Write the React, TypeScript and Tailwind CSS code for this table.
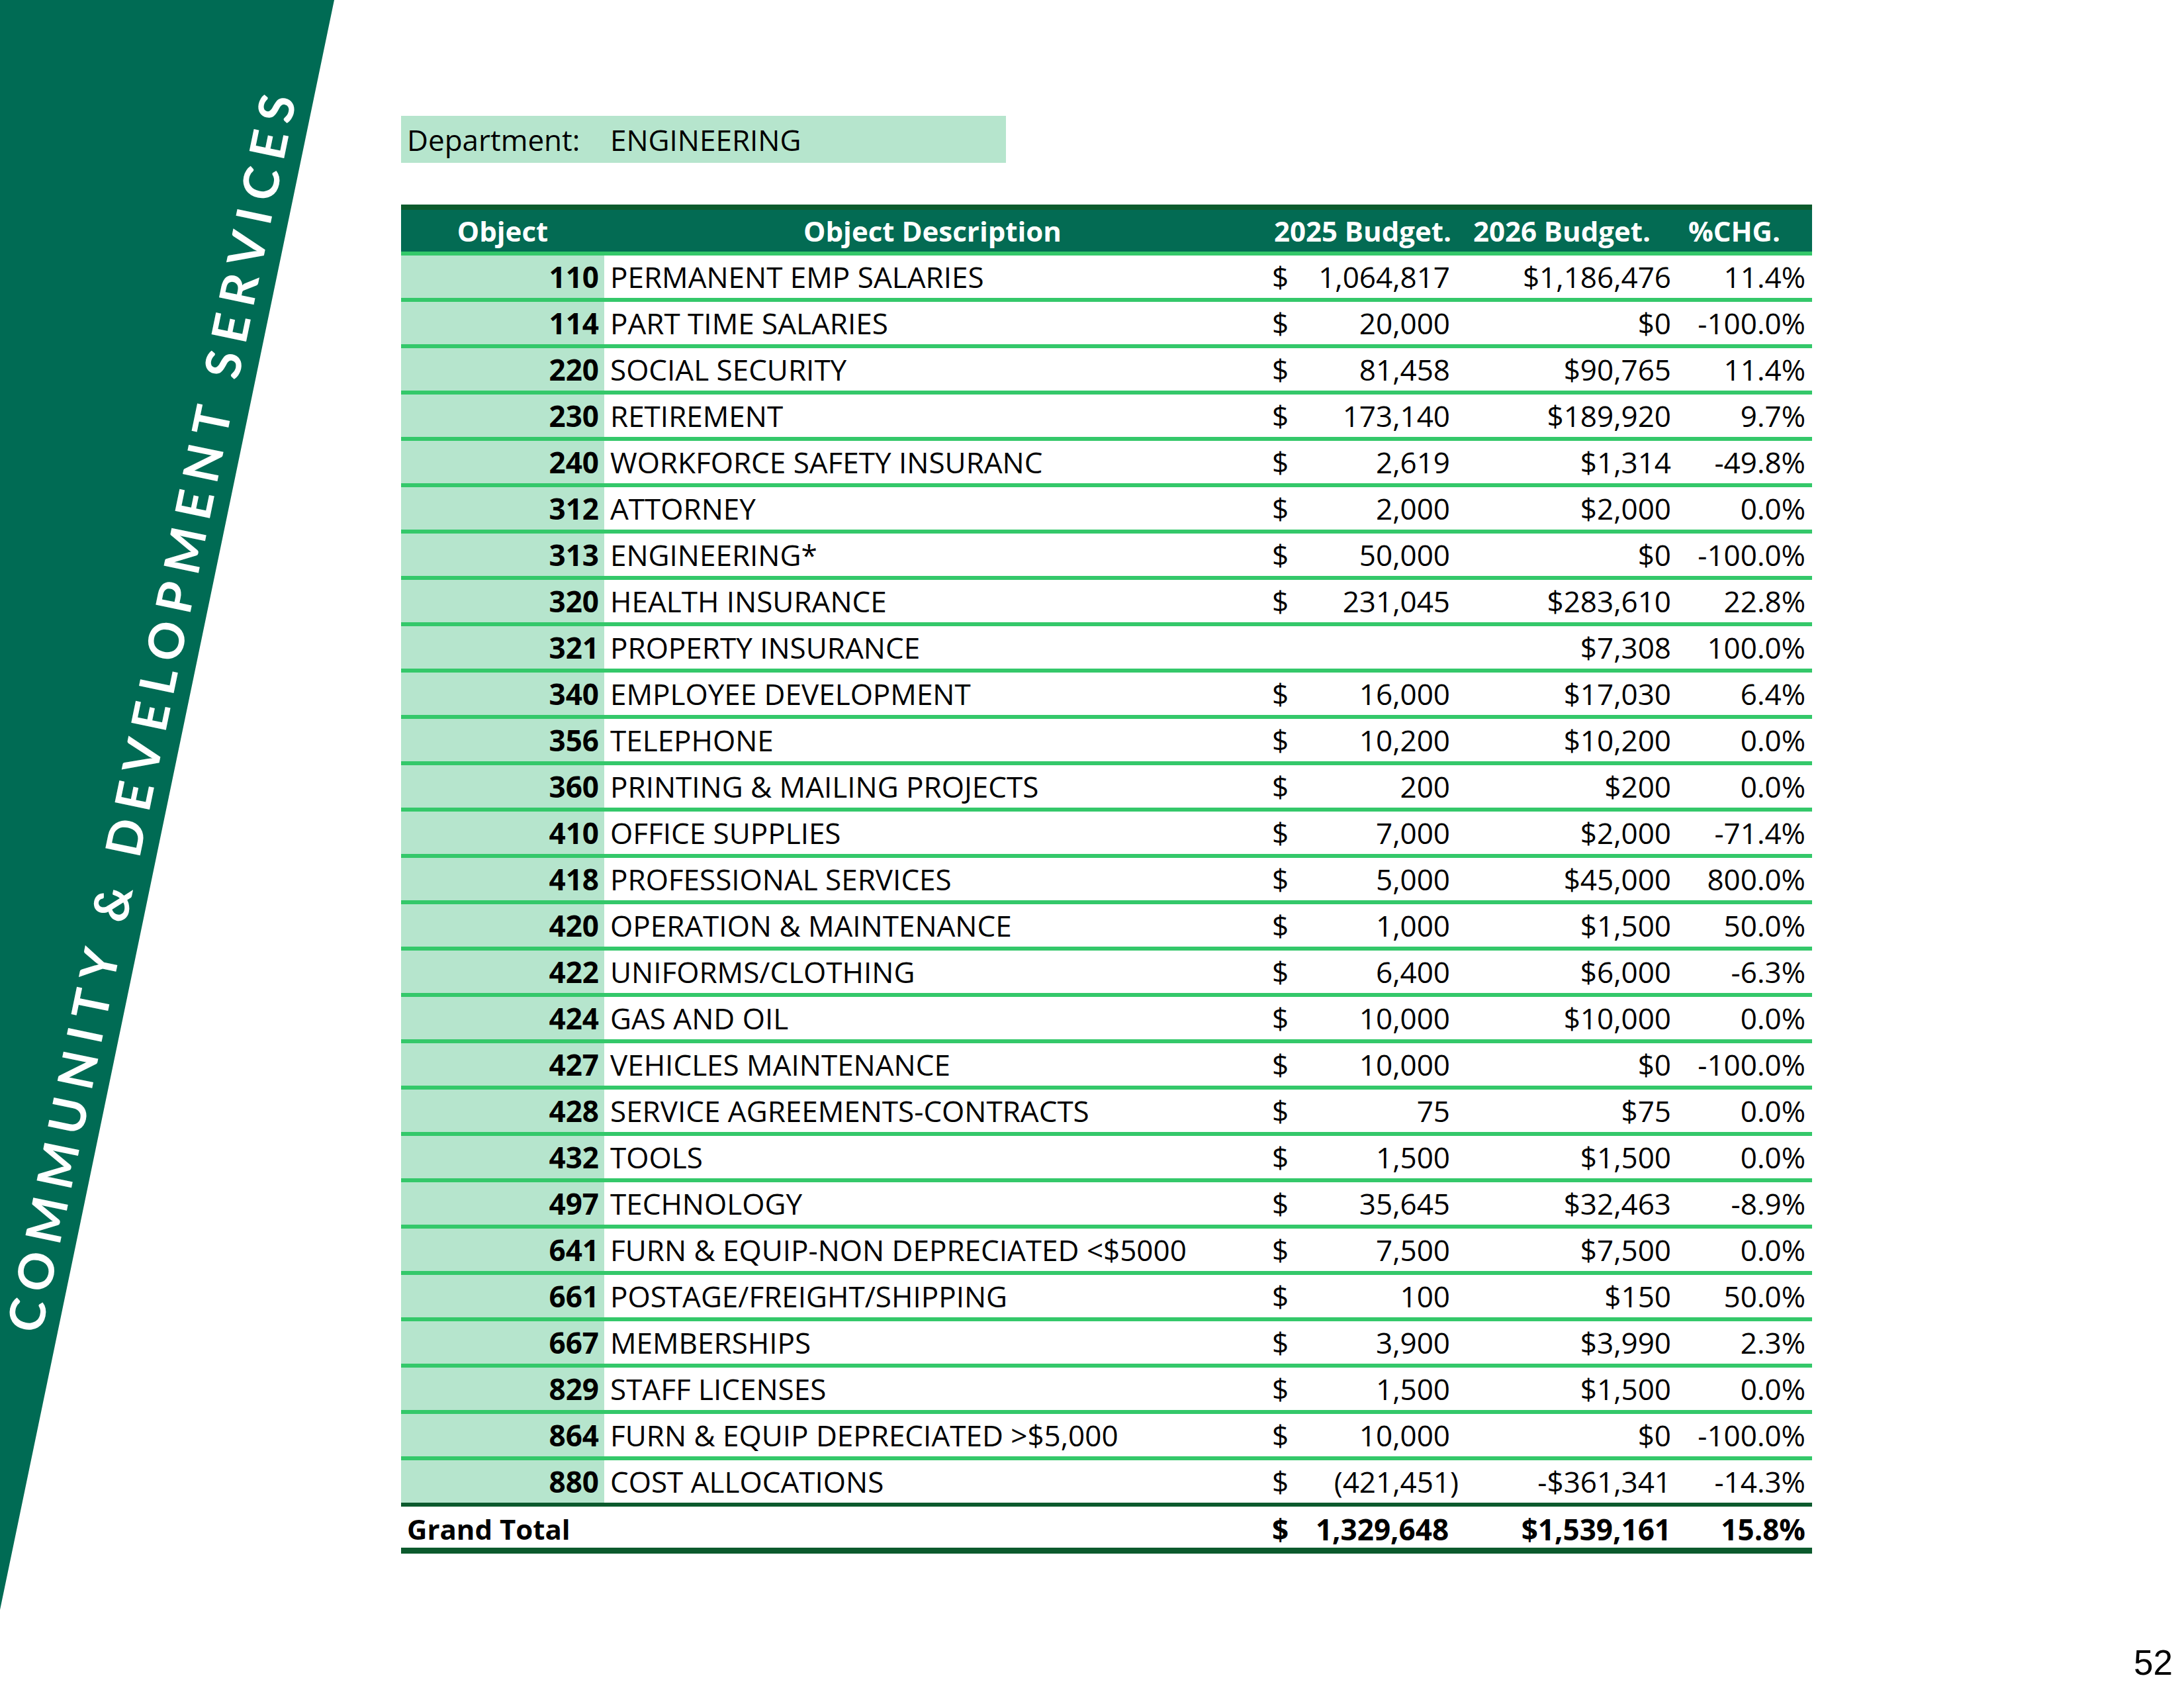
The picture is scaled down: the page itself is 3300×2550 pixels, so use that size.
import React from 'react';

interface BudgetLine {
  object: string;
  description: string;
  budget2025: string;
  budget2026: string;
  change: string;
}

const budgetLines: BudgetLine[] = [
  { object: '110', description: 'PERMANENT EMP SALARIES', budget2025: '1,064,817', budget2026: '$1,186,476', change: '11.4%' },
  { object: '114', description: 'PART TIME SALARIES', budget2025: '20,000', budget2026: '$0', change: '-100.0%' },
  { object: '220', description: 'SOCIAL SECURITY', budget2025: '81,458', budget2026: '$90,765', change: '11.4%' },
  { object: '230', description: 'RETIREMENT', budget2025: '173,140', budget2026: '$189,920', change: '9.7%' },
  { object: '240', description: 'WORKFORCE SAFETY INSURANC', budget2025: '2,619', budget2026: '$1,314', change: '-49.8%' },
  { object: '312', description: 'ATTORNEY', budget2025: '2,000', budget2026: '$2,000', change: '0.0%' },
  { object: '313', description: 'ENGINEERING*', budget2025: '50,000', budget2026: '$0', change: '-100.0%' },
  { object: '320', description: 'HEALTH INSURANCE', budget2025: '231,045', budget2026: '$283,610', change: '22.8%' },
  { object: '321', description: 'PROPERTY INSURANCE', budget2025: '', budget2026: '$7,308', change: '100.0%' },
  { object: '340', description: 'EMPLOYEE DEVELOPMENT', budget2025: '16,000', budget2026: '$17,030', change: '6.4%' },
  { object: '356', description: 'TELEPHONE', budget2025: '10,200', budget2026: '$10,200', change: '0.0%' },
  { object: '360', description: 'PRINTING & MAILING PROJECTS', budget2025: '200', budget2026: '$200', change: '0.0%' },
  { object: '410', description: 'OFFICE SUPPLIES', budget2025: '7,000', budget2026: '$2,000', change: '-71.4%' },
  { object: '418', description: 'PROFESSIONAL SERVICES', budget2025: '5,000', budget2026: '$45,000', change: '800.0%' },
  { object: '420', description: 'OPERATION & MAINTENANCE', budget2025: '1,000', budget2026: '$1,500', change: '50.0%' },
  { object: '422', description: 'UNIFORMS/CLOTHING', budget2025: '6,400', budget2026: '$6,000', change: '-6.3%' },
  { object: '424', description: 'GAS AND OIL', budget2025: '10,000', budget2026: '$10,000', change: '0.0%' },
  { object: '427', description: 'VEHICLES MAINTENANCE', budget2025: '10,000', budget2026: '$0', change: '-100.0%' },
  { object: '428', description: 'SERVICE AGREEMENTS-CONTRACTS', budget2025: '75', budget2026: '$75', change: '0.0%' },
  { object: '432', description: 'TOOLS', budget2025: '1,500', budget2026: '$1,500', change: '0.0%' },
  { object: '497', description: 'TECHNOLOGY', budget2025: '35,645', budget2026: '$32,463', change: '-8.9%' },
  { object: '641', description: 'FURN & EQUIP-NON DEPRECIATED <$5000', budget2025: '7,500', budget2026: '$7,500', change: '0.0%' },
  { object: '661', description: 'POSTAGE/FREIGHT/SHIPPING', budget2025: '100', budget2026: '$150', change: '50.0%' },
  { object: '667', description: 'MEMBERSHIPS', budget2025: '3,900', budget2026: '$3,990', change: '2.3%' },
  { object: '829', description: 'STAFF LICENSES', budget2025: '1,500', budget2026: '$1,500', change: '0.0%' },
  { object: '864', description: 'FURN & EQUIP DEPRECIATED >$5,000', budget2025: '10,000', budget2026: '$0', change: '-100.0%' },
  { object: '880', description: 'COST ALLOCATIONS', budget2025: '(421,451)', budget2026: '-$361,341', change: '-14.3%' },
];

const cols = 'grid grid-cols-[307px_992px_302px_328px_203px]';

// accounting style: "$" pinned left, figure right, room kept for ")"
function Accounting({ value }: { value: string }) {
  if (!value) return <div />;
  const negative = value.startsWith('(');
  return (
    <div className="flex justify-between items-center pl-[17px] pr-[3px]">
      <span>$</span>
      <span>
        {value}
        {!negative && <span className="invisible">)</span>}
      </span>
    </div>
  );
}

export default function EngineeringBudgetPage() {
  return (
    <div className="w-[3300px] h-[2550px] bg-white flex overflow-hidden text-black font-['Open_Sans',sans-serif]">
      {/* Section band */}
      <aside className="relative w-[505px] h-full shrink-0">
        <svg width="505" height="2550" className="absolute inset-0">
          <polygon points="0,0 505,0 0,2432" fill="#006b54" />
        </svg>
        <div className="absolute left-[229px] top-[1070px] -translate-x-1/2 -translate-y-1/2 rotate-[-78.33deg] whitespace-nowrap leading-none text-white font-['Lato',sans-serif] font-bold text-[74px] tracking-[0.195em]">
          COMMUNITY &amp; DEVELOPMENT SERVICES
        </div>
      </aside>

      <main className="flex-1 flex flex-col pl-[101px] pt-[175px]">
        {/* Department */}
        <div className="flex items-center w-[914px] h-[71px] bg-[#b6e5cd] text-[44px] leading-none">
          <span className="w-[307px] pl-[9px]">Department:</span>
          <span className="pl-[9px]">ENGINEERING</span>
        </div>

        {/* Table */}
        <div className="mt-[63px] w-[2132px] text-[44px] leading-none">
          <div className={`${cols} h-[77px] bg-[#036b53] border-t-[8px] border-b-[6px] border-t-[#0c5a2d] border-b-[#34c86a] text-white font-bold text-[42px]`}>
            <div className="flex items-center justify-center">Object</div>
            <div className="flex items-center justify-center">Object Description</div>
            <div className="flex items-center justify-end pr-[14px]">2025 Budget.</div>
            <div className="flex items-center justify-end pr-[41px]">2026 Budget.</div>
            <div className="flex items-center justify-end pr-[48px]">%CHG.</div>
          </div>

          {budgetLines.map((line, i) => (
            <div
              key={line.object}
              className={`${cols} h-[70px] border-b-[6px] ${i === budgetLines.length - 1 ? 'border-[#0c5a2d]' : 'border-[#34c86a]'}`}
            >
              <div className="flex items-center justify-end pr-[8px] bg-[#b6e5cd] font-bold">{line.object}</div>
              <div className="flex items-center pl-[9px] whitespace-nowrap">{line.description}</div>
              <div className="flex items-center">
                <div className="w-full">
                  <Accounting value={line.budget2025} />
                </div>
              </div>
              <div className="flex items-center justify-end pr-[10px]">{line.budget2026}</div>
              <div className="flex items-center justify-end pr-[10px]">{line.change}</div>
            </div>
          ))}

          {/* Grand total */}
          <div className={`${cols} h-[71px] pt-[6px] border-b-[9px] border-[#0c5a2d] font-bold`}>
            <div className="flex items-center pl-[9px] text-[42px]">Grand Total</div>
            <div />
            <div className="flex items-center">
              <div className="w-full">
                <Accounting value="1,329,648" />
              </div>
            </div>
            <div className="flex items-center justify-end pr-[10px]">$1,539,161</div>
            <div className="flex items-center justify-end pr-[10px]">15.8%</div>
          </div>
        </div>

        <div className="mt-auto self-end pr-[17px] pb-[12px] text-[53px] leading-none font-['Liberation_Sans',sans-serif]">
          52
        </div>
      </main>
    </div>
  );
}
